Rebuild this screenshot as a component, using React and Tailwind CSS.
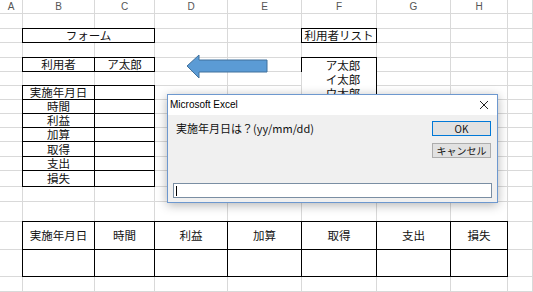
import React from "react";

const GRAY = "border-r border-b border-[#d9d9d9]";
const BOX =
  "border-r border-b border-black shadow-[0_-1px_0_0_#000,-1px_0_0_0_#000,-1px_-1px_0_0_#000]";
const TXT =
  "flex items-center justify-center whitespace-nowrap leading-[13px] text-[11.5px] text-[#111] font-['Noto_Sans_CJK_JP',sans-serif]";

function E() {
  return <div className={GRAY} />;
}

function B({ children, className = "" }) {
  return <div className={`${BOX} ${TXT} ${className}`}>{children}</div>;
}

function empties(n, key) {
  return Array.from({ length: n }, (_, i) => <E key={key + i} />);
}

const cols = ["A", "B", "C", "D", "E", "F", "G", "H", ""];
const bTable = ["時間", "利益", "加算", "取得", "支出", "損失"];
const bottom = ["実施年月日", "時間", "利益", "加算", "取得", "支出", "損失"];

export default function App() {
  return (
    <div className="relative w-[533px] h-[292px] overflow-hidden bg-white">
      <div className="grid grid-cols-[23px_72px_60px_73px_74px_75px_74px_57px_25px] grid-rows-[14px_15px_14px_15px_14px_14px_14px_14px_14px_14px_15px_14px_16px_15px_20px_28px_27px_15px] w-[533px] h-[292px]">
        {/* column headers */}
        {cols.map((c, i) => (
          <div
            key={"h" + i}
            className={`${GRAY} flex items-center justify-center text-[10px] leading-[11px] text-[#555] font-['Liberation_Sans',sans-serif]`}
          >
            {c}
          </div>
        ))}
        {/* row 1 */}
        {empties(9, "r1-")}
        {/* row 2 */}
        <E />
        <B className="col-span-2">フォーム</B>
        <E />
        <E />
        <B>利用者リスト</B>
        <E />
        <E />
        <E />
        {/* row 3 */}
        {empties(9, "r3-")}
        {/* row 4 */}
        <E />
        <B>利用者</B>
        <B>ア太郎</B>
        <E />
        <E />
        <div
          className={`row-span-5 ${BOX} flex flex-col text-[11.5px] leading-[13px] text-[#111] font-['Noto_Sans_CJK_JP',sans-serif]`}
        >
          {["ア太郎", "イ太郎", "ウ太郎"].map((n) => (
            <div key={n} className="h-[14px] flex items-center justify-center pl-[8px]">
              {n}
            </div>
          ))}
        </div>
        <E />
        <E />
        <E />
        {/* row 5 */}
        {empties(5, "r5a-")}
        {empties(3, "r5b-")}
        {/* row 6 */}
        <E />
        <B>実施年月日</B>
        <B />
        <E />
        <E />
        <E />
        <E />
        <E />
        {/* rows 7-12 */}
        {bTable.map((t, i) => (
          <React.Fragment key={t}>
            <E />
            <B>{t}</B>
            <B />
            <E />
            <E />
            {i >= 2 ? <E /> : null}
            <E />
            <E />
            <E />
          </React.Fragment>
        ))}
        {/* rows 13-14 */}
        {empties(9, "r13-")}
        {empties(9, "r14-")}
        {/* bottom table header */}
        <E />
        {bottom.map((t) => (
          <B key={"bt" + t}>{t}</B>
        ))}
        <E />
        {/* bottom table body */}
        <E />
        {bottom.map((t) => (
          <B key={"bb" + t} />
        ))}
        <E />
        {/* last row */}
        {empties(9, "r17-")}
      </div>

      {/* arrow shape */}
      <svg
        className="absolute left-[185px] top-[53px]"
        width="84"
        height="27"
        viewBox="0 0 84 27"
      >
        <polygon
          points="2,13 14,2 14,7 82,7 82,19 14,19 14,25"
          fill="#5b9bd5"
          stroke="#41719c"
          strokeWidth="1"
        />
      </svg>

      {/* dialog */}
      <div className="absolute left-[167px] top-[94px] w-[331px] h-[109px] border border-[#6d98cf] bg-[#f0f0f0] shadow-[0_2px_10px_rgba(0,0,0,0.3)] flex flex-col">
        <div className="h-[20px] bg-white flex items-center justify-between pl-[2px] pr-[8px]">
          <span className="text-[10px] leading-[12px] text-black font-['Liberation_Sans',sans-serif]">
            Microsoft Excel
          </span>
          <svg width="10" height="10" viewBox="0 0 10 10">
            <path d="M1 1 L9 9 M9 1 L1 9" stroke="#222" strokeWidth="1" fill="none" />
          </svg>
        </div>
        <div className="flex-1 flex flex-col pl-[5px] pr-[5px] pb-[4px]">
          <div className="flex justify-between">
            <div className="pt-[7px] pl-[3px] text-[11px] leading-[13px] text-[#111] font-['Noto_Sans_CJK_JP',sans-serif]">
              実施年月日は？(yy/mm/dd)
            </div>
            <div className="flex flex-col gap-[7px] pt-[6px] mr-[1px]">
              <div className="w-[59px] h-[15px] border border-[#0078d7] bg-[#e1e1e1] flex items-center justify-center text-[10px] leading-[12px] text-[#111] font-['Noto_Sans_CJK_JP',sans-serif]">
                OK
              </div>
              <div className="w-[59px] h-[15px] border border-[#adadad] bg-[#e1e1e1] flex items-center justify-center text-[10px] leading-[12px] text-[#111] font-['Noto_Sans_CJK_JP',sans-serif]">
                キャンセル
              </div>
            </div>
          </div>
          <div className="mt-auto h-[15px] border border-[#7a8ea3] bg-white flex items-center pl-[2px]">
            <div className="w-px h-[10px] bg-black" />
          </div>
        </div>
      </div>
    </div>
  );
}
